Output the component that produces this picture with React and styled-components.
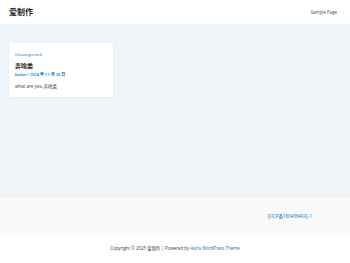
import React from "react";
import styled, { createGlobalStyle } from "styled-components";

const Global = createGlobalStyle`
  html, body { margin: 0; padding: 0; }
  body {
    font-family: "Open Sans", "Noto Sans CJK SC", sans-serif;
    color: #3a3a3a;
    background: #ffffff;
  }
`;

const Page = styled.div`
  display: flex;
  flex-direction: column;
  width: 350px;
  height: 263px;
`;

const Header = styled.header`
  display: flex;
  align-items: center;
  justify-content: space-between;
  height: 23.5px;
  padding: 0 13px 0 9px;
  background: #ffffff;
`;

const Logo = styled.div`
  font-family: "Noto Sans CJK SC", sans-serif;
  font-size: 8px;
  font-weight: 700;
  color: #1e1e1e;
`;

const NavLink = styled.a`
  font-size: 4.4px;
  color: #4b4f58;
  text-decoration: none;
`;

const Main = styled.main`
  flex: 1;
  background: #f0f5fa;
  padding: 19.5px 9px;
`;

const Card = styled.article`
  width: 104px;
  box-sizing: border-box;
  background: #ffffff;
  border-radius: 2px;
  padding: 9px 6px 8.5px;
  box-shadow: 0 1px 3px rgba(0, 0, 0, 0.06);
`;

const Category = styled.div`
  font-size: 4px;
  color: #0170b9;
  line-height: 5px;
`;

const Title = styled.h2`
  margin: 5px 0 0;
  font-family: "Noto Sans CJK SC", sans-serif;
  font-size: 6px;
  font-weight: 700;
  line-height: 8px;
  color: #1e1e1e;
`;

const Meta = styled.div`
  margin-top: 1.5px;
  font-size: 4px;
  font-weight: 600;
  line-height: 5px;
  color: #0170b9;
`;

const Excerpt = styled.p`
  margin: 6px 0 0;
  font-size: 4.5px;
  line-height: 6px;
  color: #3a3a3a;
`;

const FooterTop = styled.div`
  display: flex;
  align-items: center;
  justify-content: flex-end;
  height: 35px;
  padding-right: 38px;
  background: #f9f9f9;
`;

const FooterLink = styled.a`
  font-size: 4.5px;
  color: #0170b9;
  text-decoration: none;
`;

const FooterBottom = styled.div`
  display: flex;
  align-items: center;
  justify-content: center;
  height: 30px;
  background: #ffffff;
  font-size: 4.4px;
  color: #3a3a3a;
`;

const Blue = styled.span`
  color: #0170b9;
`;

export default function App() {
  return (
    <Page>
      <Global />
      <Header>
        <Logo>爱制作</Logo>
        <NavLink href="#">Sample Page</NavLink>
      </Header>
      <Main>
        <Card>
          <Category>Uncategorized</Category>
          <Title>弄啥类</Title>
          <Meta>bofan / 2024 年 11 月 26 日</Meta>
          <Excerpt>what are you 弄啥类</Excerpt>
        </Card>
      </Main>
      <FooterTop>
        <FooterLink href="#">京ICP备18043640号-1</FooterLink>
      </FooterTop>
      <FooterBottom>
        <span>
          Copyright © 2025 爱制作 | Powered by <Blue>Astra WordPress Theme</Blue>
        </span>
      </FooterBottom>
    </Page>
  );
}
